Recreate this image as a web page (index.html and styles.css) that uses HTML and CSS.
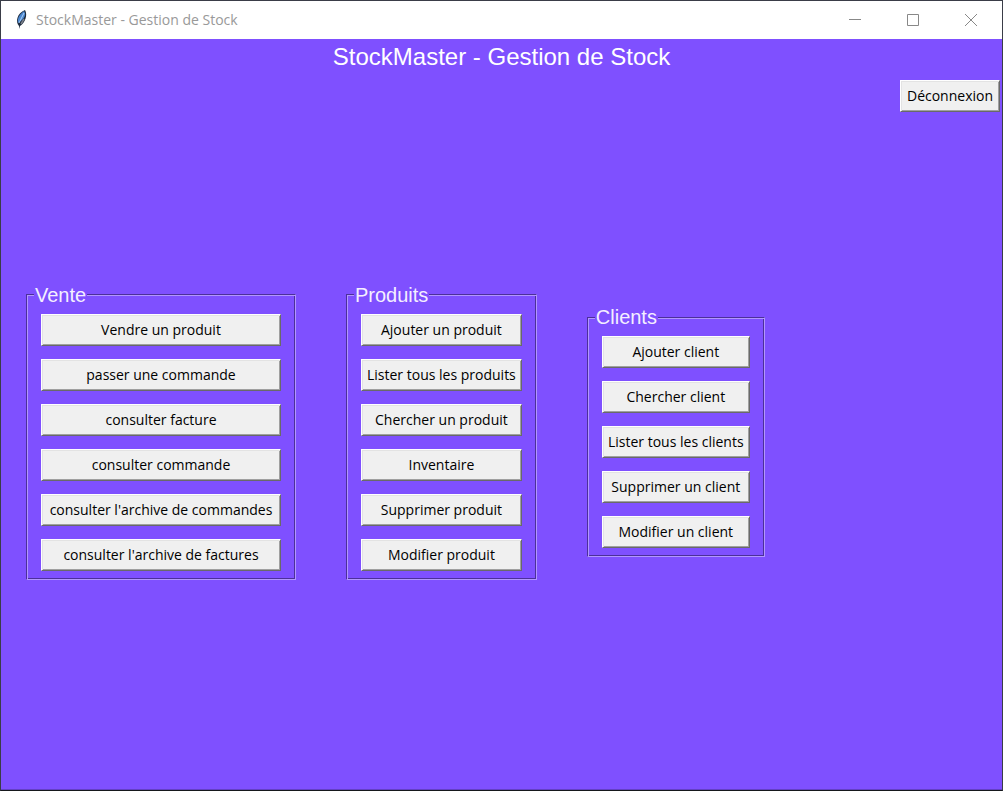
FILE: index.html
```html
<!DOCTYPE html>
<html lang="fr">
<head>
<meta charset="utf-8">
<title>StockMaster - Gestion de Stock</title>
<link rel="stylesheet" href="styles.css">
</head>
<body>
<div class="window">
  <header class="titlebar">
    <svg class="feather" viewBox="0 0 16 22" aria-hidden="true">
      <path d="M6 20 L6 17 C2 13 4 4 12 1 C15 6 12 14 7 17 Z" fill="#1d2b3d"/>
      <path d="M5 14 C4 9 7 5 11 2 C13 5 12 8 9 11 Z" fill="#4a86cf"/>
      <path d="M6 14 L11 4" stroke="#a9cdf5" stroke-width="1" fill="none"/>
      <path d="M11 10 L8 15" stroke="#7b7f88" stroke-width="1.5" fill="none"/>
    </svg>
    <span class="caption">StockMaster - Gestion de Stock</span>
    <div class="controls">
      <button class="control" type="button" aria-label="Réduire"><svg viewBox="0 0 12 12"><path d="M0 5.5H12"/></svg></button>
      <button class="control" type="button" aria-label="Agrandir"><svg viewBox="0 0 12 12"><path d="M.5 .5H11.5V11.5H.5Z"/></svg></button>
      <button class="control" type="button" aria-label="Fermer"><svg viewBox="0 0 12 12"><path d="M0 0L12 12M12 0L0 12"/></svg></button>
    </div>
  </header>
  <main class="content">
    <h1 class="heading">StockMaster - Gestion de Stock</h1>
    <div class="session"><button class="btn" type="button">Déconnexion</button></div>
    <div class="groups">
      <fieldset class="group group-wide">
        <legend class="legend">Vente</legend>
        <div class="actions">
          <button class="btn" type="button">Vendre un produit</button>
          <button class="btn" type="button">passer une commande</button>
          <button class="btn" type="button">consulter facture</button>
          <button class="btn" type="button">consulter commande</button>
          <button class="btn" type="button">consulter l'archive de commandes</button>
          <button class="btn" type="button">consulter l'archive de factures</button>
        </div>
      </fieldset>
      <fieldset class="group">
        <legend class="legend">Produits</legend>
        <div class="actions">
          <button class="btn" type="button">Ajouter un produit</button>
          <button class="btn" type="button">Lister tous les produits</button>
          <button class="btn" type="button">Chercher un produit</button>
          <button class="btn" type="button">Inventaire</button>
          <button class="btn" type="button">Supprimer produit</button>
          <button class="btn" type="button">Modifier produit</button>
        </div>
      </fieldset>
      <fieldset class="group">
        <legend class="legend">Clients</legend>
        <div class="actions">
          <button class="btn" type="button">Ajouter client</button>
          <button class="btn" type="button">Chercher client</button>
          <button class="btn" type="button">Lister tous les clients</button>
          <button class="btn" type="button">Supprimer un client</button>
          <button class="btn" type="button">Modifier un client</button>
        </div>
      </fieldset>
    </div>
  </main>
</div>
</body>
</html>
```
FILE: styles.css
```css
* { box-sizing: border-box; }

body { margin: 0; }

.window {
  display: flex;
  flex-direction: column;
  min-height: 100vh;
  border: 1px solid #3a3d48;
  border-bottom-color: #16181c;
  background: #7f50ff;
}

.titlebar {
  display: flex;
  align-items: center;
  height: 38px;
  padding: 0 2px 0 12px;
  background: #fff;
}

.feather { width: 16px; height: 22px; }

.caption {
  margin-left: 7px;
  padding-bottom: 1px;
  color: #999;
  font: 14px/20px "Open Sans", "Noto Sans", sans-serif;
}

.controls { display: flex; align-self: stretch; margin-left: auto; }

.control {
  display: grid;
  place-items: center;
  width: 58px;
  padding: 0;
  border: 0;
  background: none;
}

.control svg {
  width: 12px;
  height: 12px;
  fill: none;
  stroke: #888;
  stroke-width: 1;
}

.content {
  display: flex;
  flex: 1;
  flex-direction: column;
  border-bottom: 1px solid #6340c4;
}

.heading {
  margin: 0;
  padding: 4px 0;
  color: #fff;
  font: 24px/28px "Liberation Sans", Arial, sans-serif;
  text-align: center;
}

.session { display: flex; justify-content: flex-end; padding: 5px 2px 0 0; }

.session .btn { min-width: 100px; }

.groups {
  display: flex;
  flex: 1;
  align-items: center;
  gap: 50px;
  padding: 0 25px 38px;
}

/* Engraved frame: dark/light outer line with the reverse inside it */
.group {
  min-width: 178px;
  margin: 0;
  padding: 8px 14px;
  border: 1px solid;
  border-color: #4c3099 #b296ff #b296ff #4c3099;
  box-shadow: inset 1px 1px #b296ff, inset -1px -1px #4c3099;
}

.group-wide { min-width: 270px; }

.legend {
  margin-left: -7px;
  padding: 0 1px;
  background: #7f50ff;
  color: #f4efff;
  font: 20px/22px "Liberation Sans", Arial, sans-serif;
}

.actions { display: flex; flex-direction: column; gap: 13px; }

.btn {
  height: 32px;
  padding: 0 5px;
  border: 1px solid;
  border-color: #fff #696969 #696969 #fff;
  background: #f0f0f0;
  box-shadow: inset 1px 1px #e3e3e3, inset -1px -1px #a0a0a0;
  color: #000;
  font: 14px/20px "Open Sans", "Noto Sans", sans-serif;
  white-space: nowrap;
}
```
